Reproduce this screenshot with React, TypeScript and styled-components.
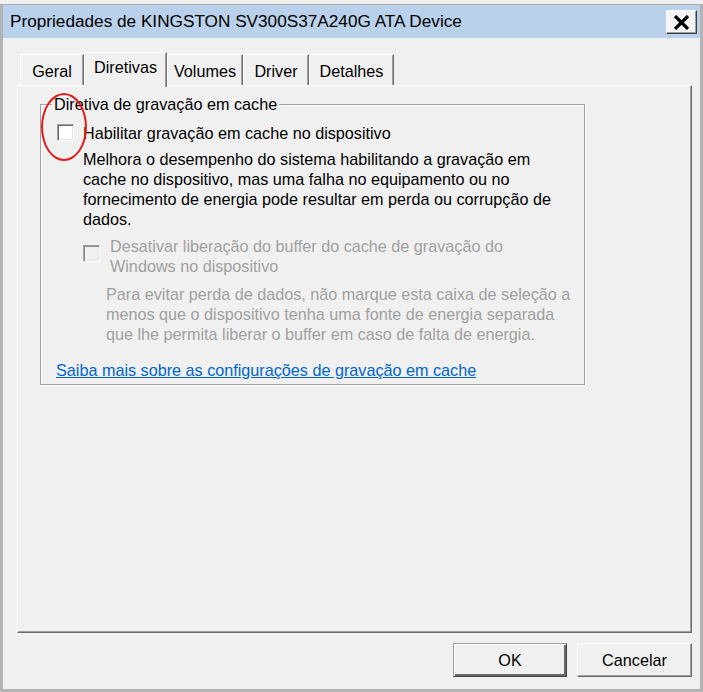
import React from "react";
import styled, { createGlobalStyle } from "styled-components";

const Global = createGlobalStyle`
  html, body { margin: 0; padding: 0; background: #f0f0f0; }
  * { box-sizing: border-box; }
`;

const FONT = `"Liberation Sans", Arial, sans-serif`;

const Window = styled.div`
  position: relative;
  width: 703px;
  height: 688px;
  margin-top: 4px;
  background: #f0f0f0;
  border: 3px solid #b3b3b3;
  border-top: 1px solid #a9a9a9;
  font-family: ${FONT};
  font-size: 16.2px;
  color: #000;
  display: flex;
  flex-direction: column;
`;

const TitleBar = styled.div`
  height: 33px;
  background: #b9d1ea;
  display: flex;
  align-items: flex-start;
  justify-content: space-between;
  padding-left: 7px;
  padding-right: 3px;
`;

const Title = styled.span`
  font-size: 17.2px;
  line-height: 33px;
`;

const CloseButton = styled.div`
  margin-top: 5px;
  width: 31px;
  height: 24px;
  background: #f4f4f4;
  border: 1px solid;
  border-color: #ffffff #404040 #404040 #ffffff;
  box-shadow: inset -1px -1px #a0a0a0;
  display: flex;
  align-items: center;
  justify-content: center;
`;

const Body = styled.div`
  flex: 1;
  display: flex;
  flex-direction: column;
  padding: 14px 8px 0 14px;
`;

const TabStrip = styled.div`
  display: flex;
  align-items: flex-end;
  padding-left: 3px;
  height: 35px;
  margin-bottom: -2px;
  position: relative;
  z-index: 1;
`;

const Tab = styled.div<{ $w: number; $active?: boolean }>`
  width: ${(p) => p.$w}px;
  height: ${(p) => (p.$active ? 35 : 31)}px;
  padding-top: ${(p) => (p.$active ? 4 : 6)}px;
  text-align: center;
  line-height: 20px;
  background: #f0f0f0;
  border-top: 1px solid #ffffff;
  border-left: 1px solid #ffffff;
  border-right: 1px solid #6f6f6f;
  box-shadow: inset -1px 0 #a0a0a0;
  margin-bottom: ${(p) => (p.$active ? 0 : 2)}px;
`;

const Panel = styled.div`
  height: 548px;
  background: #f0f0f0;
  border-top: 1px solid #ffffff;
  border-left: 1px solid #ffffff;
  border-right: 1px solid #696969;
  border-bottom: 1px solid #696969;
  box-shadow: inset -1px -1px #a0a0a0;
  padding: 8px 0 0 22px;
`;

const Group = styled.fieldset`
  width: 545px;
  margin: 0;
  padding: 0 0 4px 0;
  border: 1px solid #a0a0a0;
  box-shadow: inset 1px 1px #ffffff, 1px 1px #ffffff;
  min-width: 0;
`;

const Legend = styled.legend`
  margin-left: 11px;
  padding: 0 2px;
  line-height: 20px;
  background: #f0f0f0;
`;

const Row = styled.div<{ $indent: number; $top: number }>`
  display: flex;
  align-items: flex-start;
  padding-left: ${(p) => p.$indent}px;
  margin-top: ${(p) => p.$top}px;
`;

const Check = styled.div<{ $disabled?: boolean; $top: number }>`
  width: 17px;
  height: 17px;
  flex: none;
  margin-top: ${(p) => p.$top}px;
  background: ${(p) => (p.$disabled ? "#f0f0f0" : "#ffffff")};
  border: 1px solid;
  border-color: #a0a0a0 #ffffff #ffffff #a0a0a0;
  box-shadow: inset 1px 1px ${(p) => (p.$disabled ? "#8a8a8a" : "#696969")},
    inset -1px -1px #e3e3e3;
`;

const Label = styled.div<{ $gap: number; $disabled?: boolean }>`
  margin-left: ${(p) => p.$gap}px;
  line-height: 20px;
  white-space: nowrap;
  color: ${(p) => (p.$disabled ? "#a0a0a0" : "#000")};
`;

const Text = styled.div<{ $indent: number; $top: number; $disabled?: boolean }>`
  padding-left: ${(p) => p.$indent}px;
  margin-top: ${(p) => p.$top}px;
  line-height: 20px;
  white-space: nowrap;
  color: ${(p) => (p.$disabled ? "#a0a0a0" : "#000")};
`;

const Link = styled.a`
  display: block;
  margin: 16px 0 0 15px;
  line-height: 20px;
  color: #0066cc;
  text-decoration: underline;
  cursor: pointer;
`;

const Footer = styled.div`
  display: flex;
  justify-content: flex-end;
  gap: 10px;
  margin-top: 10px;
`;

const Button = styled.div<{ $default?: boolean }>`
  width: ${(p) => (p.$default ? 114 : 115)}px;
  height: 34px;
  display: flex;
  align-items: center;
  justify-content: center;
  background: #f0f0f0;
  border: 1px solid;
  border-color: ${(p) =>
    p.$default ? "#a0a0a0 #404040 #404040 #a0a0a0" : "#ffffff #696969 #696969 #ffffff"};
  box-shadow: ${(p) =>
    p.$default
      ? "inset 1px 1px #ffffff, inset -2px -2px #696969"
      : "inset -1px -1px #a0a0a0"};
`;

const Annotation = styled.div`
  position: absolute;
  left: 38px;
  top: 88px;
  width: 46px;
  height: 68px;
  border: 2px solid #e01b1b;
  border-radius: 50%;
  pointer-events: none;
`;

export default function App() {
  return (
    <>
      <Global />
      <Window>
        <TitleBar>
          <Title>Propriedades de KINGSTON SV300S37A240G ATA Device</Title>
          <CloseButton>
            <svg width="17" height="15" viewBox="0 0 17 15">
              <path d="M2 1 L15 14 M15 1 L2 14" stroke="#000" strokeWidth="3.2" />
            </svg>
          </CloseButton>
        </TitleBar>
        <Body>
          <TabStrip>
            <Tab $w={64}>Geral</Tab>
            <Tab $w={83} $active>Diretivas</Tab>
            <Tab $w={76}>Volumes</Tab>
            <Tab $w={66}>Driver</Tab>
            <Tab $w={85}>Detalhes</Tab>
          </TabStrip>
          <Panel>
            <Group>
              <Legend>Diretiva de gravação em cache</Legend>
              <Row $indent={16} $top={9}>
                <Check $top={1} />
                <Label $gap={9}>Habilitar gravação em cache no dispositivo</Label>
              </Row>
              <Text $indent={42} $top={6}>
                Melhora o desempenho do sistema habilitando a gravação em
                <br />
                cache no dispositivo, mas uma falha no equipamento ou no
                <br />
                fornecimento de energia pode resultar em perda ou corrupção de
                <br />
                dados.
              </Text>
              <Row $indent={42} $top={7}>
                <Check $disabled $top={9} />
                <Label $gap={10} $disabled>
                  Desativar liberação do buffer do cache de gravação do
                  <br />
                  Windows no dispositivo
                </Label>
              </Row>
              <Text $indent={65} $top={8} $disabled>
                Para evitar perda de dados, não marque esta caixa de seleção a
                <br />
                menos que o dispositivo tenha uma fonte de energia separada
                <br />
                que lhe permita liberar o buffer em caso de falta de energia.
              </Text>
              <Link>Saiba mais sobre as configurações de gravação em cache</Link>
            </Group>
          </Panel>
          <Footer>
            <Button $default>OK</Button>
            <Button>Cancelar</Button>
          </Footer>
        </Body>
        <Annotation />
      </Window>
    </>
  );
}
